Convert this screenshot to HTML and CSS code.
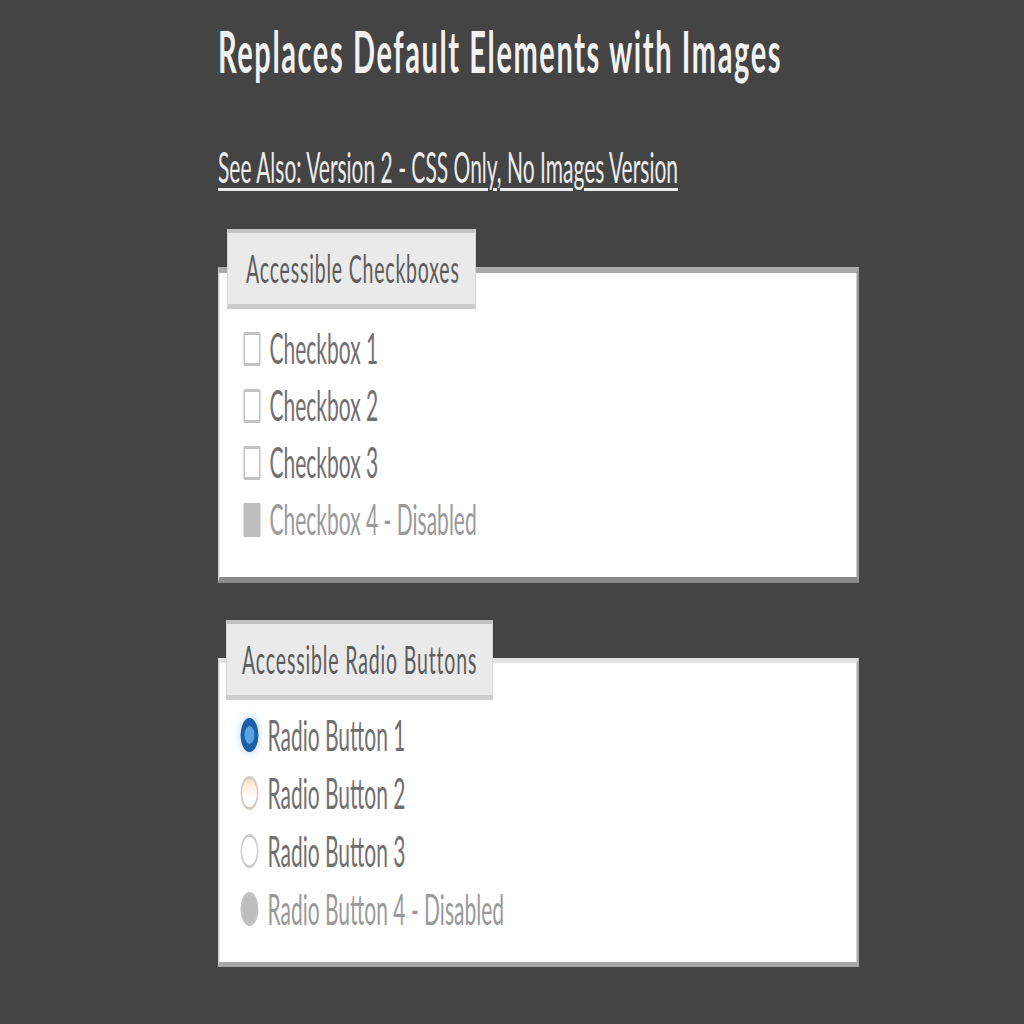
FILE: index.html
```html
<!DOCTYPE html>
<html lang="en">
<head>
<meta charset="utf-8">
<title>Accessible Checkboxes and Radio Buttons</title>
<link rel="stylesheet" href="styles.css">
</head>
<body>
<div class="viewport">
<div class="page">
  <h1 class="title">Replaces Default Elements with Images</h1>
  <p class="see-also"><a href="#">See Also: Version 2 - CSS Only, No Images Version</a></p>

  <div class="group">
    <div class="legend legend-check">Accessible Checkboxes</div>
    <div class="panel panel-check">
      <label class="row"><span class="box"></span><span class="label">Checkbox 1</span></label>
      <label class="row"><span class="box"></span><span class="label">Checkbox 2</span></label>
      <label class="row"><span class="box"></span><span class="label">Checkbox 3</span></label>
      <label class="row disabled"><span class="box box-disabled"></span><span class="label">Checkbox 4 - Disabled</span></label>
    </div>
  </div>

  <div class="group">
    <div class="legend legend-radio">Accessible Radio Buttons</div>
    <div class="panel panel-radio">
      <label class="row"><span class="radio radio-on"></span><span class="label">Radio Button 1</span></label>
      <label class="row"><span class="radio radio-focus"></span><span class="label">Radio Button 2</span></label>
      <label class="row"><span class="radio"></span><span class="label">Radio Button 3</span></label>
      <label class="row disabled"><span class="radio radio-disabled"></span><span class="label">Radio Button 4 - Disabled</span></label>
    </div>
  </div>
</div>
</div>
</body>
</html>
```

FILE: styles.css
```css
html, body {
  margin: 0;
  padding: 0;
  background: #444444;
  overflow: hidden;
}

.viewport {
  width: 1024px;
  height: 1024px;
  overflow: hidden;
}

.page {
  width: 1960px;
  box-sizing: border-box;
  padding: 19px 0 0 436px;
  transform: scaleX(0.5);
  transform-origin: 0 0;
  font-family: Lato, "Open Sans", sans-serif;
}

.title {
  margin: 0;
  font-size: 58px;
  line-height: 64px;
  font-weight: 700;
  letter-spacing: 3.2px;
  color: #f2f2f2;
  white-space: nowrap;
}

.see-also {
  margin: 59px 0 0 0;
  font-size: 42px;
  line-height: 50px;
}

.see-also a {
  color: #ececec;
  text-decoration: underline;
  text-decoration-thickness: 3px;
  text-underline-offset: 5px;
}

.group {
  margin-top: 37px;
  width: 1282px;
}

.legend {
  position: relative;
  z-index: 1;
  box-sizing: border-box;
  height: 80px;
  margin-left: 18px;
  padding-left: 36px;
  background: #eaeaea;
  border-top: 4px solid #c2c2c2;
  border-left: 2px solid #d6d6d6;
  border-right: 2px solid #d6d6d6;
  border-bottom: 5px solid #cdcdcd;
  font-size: 39px;
  line-height: 70px;
  letter-spacing: 1.6px;
  color: #5c5c5c;
  white-space: nowrap;
}

.legend-check {
  width: 498px;
}

.legend-radio {
  width: 534px;
  margin-left: 16px;
  padding-left: 30px;
  letter-spacing: 1.7px;
}

.panel {
  background: #ffffff;
  margin-top: -42px;
  padding: 47px 0 29px 48px;
  border-left: 3px solid #d0d0d0;
  border-right: 5px solid #9a9a9a;
}

.panel-check {
  border-top: 6px solid #a9a9a9;
  border-bottom: 6px solid #8a8a8a;
}

.panel-radio {
  padding-top: 43px;
  padding-bottom: 24px;
  padding-left: 42px;
  border-top: 5px solid #e0e0e0;
  border-bottom: 5px solid #a6a6a6;
  border-right-color: #a8a8a8;
}

.row {
  display: flex;
  align-items: center;
  gap: 18px;
  height: 57px;
  font-size: 42px;
  line-height: 57px;
  color: #707070;
  white-space: nowrap;
}

.panel-radio .row {
  height: 58px;
  line-height: 58px;
}

.row.disabled {
  color: #9a9a9a;
}

.box {
  box-sizing: border-box;
  width: 34px;
  height: 34px;
  flex: none;
  border: 3px solid #c2c2c2;
  border-radius: 2px;
  background: #ffffff;
}

.box-disabled {
  background: #bdbdbd;
  border-color: #bdbdbd;
}

.radio {
  box-sizing: border-box;
  width: 36px;
  height: 34px;
  flex: none;
  border-radius: 50%;
  border: 3px solid #cccccc;
  background: #ffffff;
}

.radio-on {
  border: 8px solid #1c5ea8;
  background: #5aa2e2;
  box-shadow: 0 0 10px 3px rgba(120, 180, 235, 0.35);
}

.radio-focus {
  border-color: #d2cbc4;
  background: linear-gradient(#fbe3c6, #ffffff 70%);
}

.radio-disabled {
  background: #bebebe;
  border-color: #c4c4c4;
}
```
